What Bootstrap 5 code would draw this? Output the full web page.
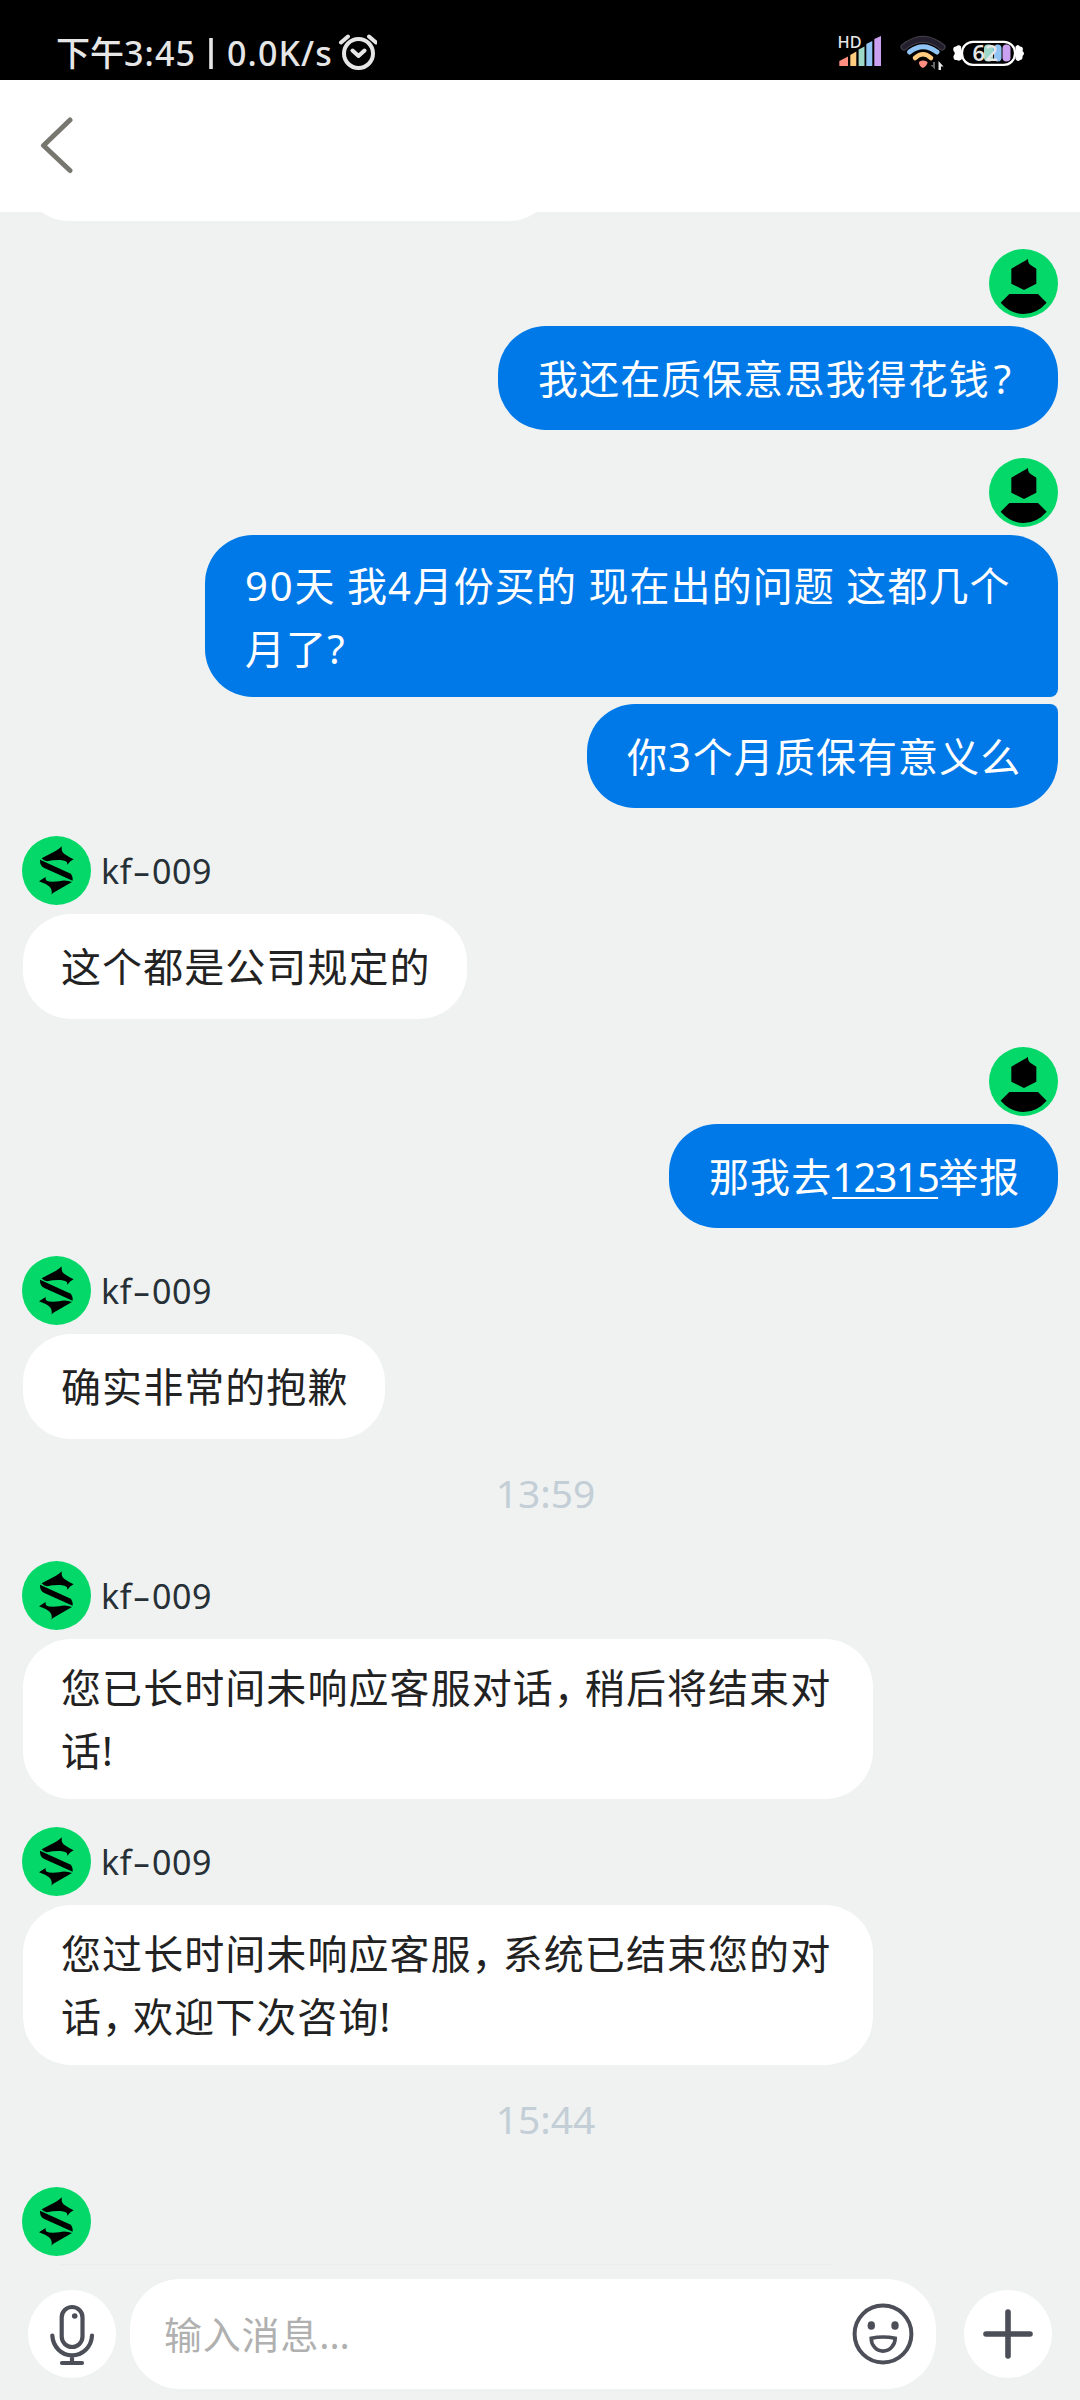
<!DOCTYPE html>
<html lang="zh-CN">
<head>
<meta charset="utf-8">
<meta name="viewport" content="width=device-width, initial-scale=1">
<title>客服对话</title>
<link rel="stylesheet" href="https://cdn.jsdelivr.net/npm/bootstrap@5.3.0/dist/css/bootstrap.min.css">
<style>
body{width:1080px;height:2400px;overflow:hidden;background:#eff2f1;font-family:"Noto Sans","Noto Sans CJK SC",sans-serif;color:#222}
svg{display:block;flex:none}
.statusbar{height:80px;padding:0 56px 0 56px;background:#000;color:#e6e6e6;font-size:34px;font-weight:500;line-height:48px}
.clock{padding-top:29px;white-space:pre}
.topbar{height:132px;padding-left:40px;background:#fff}
.chat{padding:0 22px}
.rest{width:532px;height:9px;margin-left:1px;overflow:hidden}
.rest div{width:532px;height:104px;margin-top:-95px;background:#fff;border-radius:46px}
.grp{margin-top:28px}
.ava{width:69px;height:69px}
.who{font-size:34px;line-height:48px;margin-left:10px;color:#263036;letter-spacing:.6px}
.dash{display:inline-block;transform:scaleX(1.65);margin:0 5px 0 4px;letter-spacing:0}
.bub{font-size:40px;line-height:63px;letter-spacing:1.07px;white-space:nowrap;border-radius:48px;padding:21px 0 20px 40px}
.me{background:#0079e8;color:#fff;margin-top:8px}
.me.two{padding:19px 0 17px 40px}
.kf{background:#fff;margin:9px 0 0 1px;padding:21px 0 21px 38px}
.kf.two{padding:17px 0;padding-left:38px;width:850px}
.tail-b{border-bottom-right-radius:8px}
.tail-t{border-top-right-radius:8px;margin-top:7px}
.w560{width:560px}.w853{width:853px}.w471{width:471px}.w444{width:444px}.w389{width:389px}.w362{width:362px}
.dg{letter-spacing:1.8px}
.tel{color:#fff;letter-spacing:-1.7px;text-decoration:underline;text-decoration-thickness:2px;text-underline-offset:5px}
.cm{letter-spacing:-9px}
.stamp{height:122px;padding-left:11px;padding-bottom:13px;font-size:39px;color:#c3ced6;margin-bottom:-28px}
.edge{width:772px;height:1px;margin:8px 0 0 38px;background:#e9eded}
.composer{height:110px;margin-top:14px;padding:0 28px}
.rnd{width:88px;height:88px;background:#fff}
.field{width:806px;height:110px;border-radius:50px;background:#fff;margin-left:14px;margin-right:28px;padding:0 22px 0 34px;font-size:38px;letter-spacing:.8px;color:#b0b0b0}
.dots{letter-spacing:0}
.spaced{letter-spacing:1.1px}
</style>
<script src="https://cdn.jsdelivr.net/npm/bootstrap@5.3.0/dist/js/bootstrap.bundle.min.js"></script>
</head>
<body>
<svg width="0" height="0" class="position-absolute">
<symbol id="s-logo" viewBox="66 48 207 207">
<circle cx="169.500" cy="151.500" r="103.500" fill="#04d868"/>
<path d="M125 115 168 92Q181 85 185 79Q184 92 188 97Q194 105 221 118Q211 122 202 134L201 126Q195 121 182 120Q160 119 141 124Q131 122 125 115Z"/>
<path d="M120 119 209 160Q219 165 218 182L133 144Q119 137 120 119Z"/>
<path d="M117 184 137 171Q135 178 140 182Q150 187 178 184Q195 178 216 186L160 218Q157 220 155 224Q157 206 147 199Q137 191 117 184Z"/>
</symbol>
<symbol id="p-user" viewBox="1047 51 207 207">
<circle cx="1150.500" cy="154.500" r="103.500" fill="#04d868"/>
<path d="M1114 110 1150 89Q1160 84 1164 80Q1163 94 1173 100L1189 110V155L1152 174 1114 155Z"/>
<path d="M1108 186H1194L1220 212Q1190 246 1151 246Q1112 246 1082 212Z"/>
</symbol>
</svg>

<header>
<div class="statusbar d-flex justify-content-between">
 <div class="d-flex">
  <div class="clock">下午<span class="spaced">3:45</span></div>
  <svg width="31" height="80" viewBox="0 0 31 80"><path d="M15 38V69" stroke="#e6e6e6" stroke-width="3.600"/></svg>
  <div class="clock spaced">0.0K/s</div>
  <svg width="44" height="80" viewBox="332 0 44 80" fill="none" stroke="#e6e6e6" stroke-width="4" stroke-linecap="round" stroke-linejoin="round"><circle cx="357.500" cy="53.500" r="14.500"/><path d="M351.500 50.500 357.500 56 363.500 50.500M340 42.500 347 36.500M368 36.500 375 42.500"/></svg>
 </div>
 <svg width="188" height="80" viewBox="836 0 188 80">
  <text x="837.500" y="48" font-size="16.500" font-weight="500" fill="#e6e6e6" textLength="24" lengthAdjust="spacingAndGlyphs">HD</text>
  <path d="M839.300 66V61L848 56.500V66Z" fill="#ff8c80"/><path d="M850.300 66V55L856.300 51.500V66Z" fill="#ffcc80"/><path d="M858.600 66V49.500L864.500 46.500V66Z" fill="#9ed8c8"/><path d="M866.300 66V44L872.300 41V66Z" fill="#90c4f4"/><path d="M874.300 66V39L881 36V66Z" fill="#cba0f0"/>
  <g fill="none" stroke-linecap="round"><path d="M904 47Q923 31.500 942 47" stroke="#45404c" stroke-width="7"/><path d="M904 47Q923 31.500 942 47" stroke="#241f2c" stroke-width="5"/><path d="M909.500 52Q923 41.500 937 52" stroke="#90c4f4" stroke-width="5"/><path d="M915 58Q923 50.500 931 58" stroke="#ffcc80" stroke-width="4.500"/></g>
  <path d="M919 63Q918.500 61 923 60.500Q928 61 927.500 63Q926.500 66.500 923 68Q919.500 66.500 919 63Z" fill="#ff8c80"/>
  <path d="M935 62V69.500L930.500 65H933V62Z" fill="#666"/><path d="M938.500 70V61L943.500 66.500H941V70Z" fill="#e6e6e6"/>
  <path d="M961 46.500Q959 44 956 46.500Q952.500 46.500 953.500 51Q956 53 953.500 56Q953 60.500 957 60Q959 62 962 59ZM1015.500 46.500Q1018 43.500 1020 46.500Q1024 47 1022.500 51Q1025.500 53.500 1022.500 56Q1023 60 1020 60Q1018 62.500 1015.500 59Z" fill="#fff"/>
  <rect x="962" y="41.800" width="53" height="23" rx="11" fill="#000" stroke="#fff" stroke-width="2.300"/>
  <rect x="984" y="44.500" width="9" height="17" rx="4" fill="#9ed8c8"/><rect x="994" y="44.500" width="7.500" height="17" rx="3.700" fill="#90c4f4"/><rect x="1002.500" y="44.500" width="8" height="17" rx="4" fill="#cba0f0"/>
  <text x="972.500" y="60.500" font-size="22" font-weight="600" fill="#e6e6e6">62</text>
 </svg>
</div>
<div class="topbar"><svg width="34" height="132" viewBox="40 0 34 132"><path d="M70 40 43.500 65.500 70 90.500" fill="none" stroke="#77776f" stroke-width="5" stroke-linecap="round" stroke-linejoin="round"/></svg></div>
</header>

<main class="chat d-flex flex-column">
 <div class="rest"><div></div></div>

 <section class="grp d-flex flex-column align-items-end"><svg class="ava"><use href="#p-user"/></svg>
  <div class="bub me w560">我还在质保意思我得花钱<span class="ps-1">?</span></div></section>

 <section class="grp d-flex flex-column align-items-end"><svg class="ava"><use href="#p-user"/></svg>
  <div class="bub me two w853 tail-b"><span class="dg">90</span>天 我<span class="dg">4</span>月份买的 现在出的问题 这都几个<br>月了?</div>
  <div class="bub me w471 tail-t">你<span class="dg">3</span>个月质保有意义么</div></section>

 <section class="grp"><div class="d-flex align-items-center"><svg class="ava"><use href="#s-logo"/></svg><span class="who">kf<span class="dash">-</span>009</span></div>
  <div class="bub kf w444">这个都是公司规定的</div></section>

 <section class="grp d-flex flex-column align-items-end"><svg class="ava"><use href="#p-user"/></svg>
  <div class="bub me w389">那我去<a href="#" class="tel">12315</a>举报</div></section>

 <section class="grp"><div class="d-flex align-items-center"><svg class="ava"><use href="#s-logo"/></svg><span class="who">kf<span class="dash">-</span>009</span></div>
  <div class="bub kf w362">确实非常的抱歉</div></section>

 <div class="stamp d-flex align-items-center justify-content-center">13:59</div>

 <section class="grp"><div class="d-flex align-items-center"><svg class="ava"><use href="#s-logo"/></svg><span class="who">kf<span class="dash">-</span>009</span></div>
  <div class="bub kf two">您已长时间未响应客服对话<span class="cm">，</span>稍后将结束对<br>话!</div></section>

 <section class="grp"><div class="d-flex align-items-center"><svg class="ava"><use href="#s-logo"/></svg><span class="who">kf<span class="dash">-</span>009</span></div>
  <div class="bub kf two">您过长时间未响应客服<span class="cm">，</span>系统已结束您的对<br>话<span class="cm">，</span>欢迎下次咨询!</div></section>

 <div class="stamp d-flex align-items-center justify-content-center">15:44</div>

 <section class="grp"><svg class="ava"><use href="#s-logo"/></svg><div class="edge"></div></section>
</main>

<footer class="composer d-flex align-items-center">
 <div class="rnd rounded-circle"><svg width="88" height="88" viewBox="28 2290 88 88" fill="none" stroke="#4c4e58" stroke-width="4.200" stroke-linecap="round"><rect x="61.700" y="2307" width="20.800" height="40" rx="10.400"/><path d="M52.300 2335.500C53 2347 61.500 2355.300 72 2355.300S91.500 2347 92 2335.500M72 2355.500V2363M62 2363H82"/><circle cx="74.700" cy="2316" r="2.800" fill="#4c4e58" stroke="none"/></svg></div>
 <div class="field d-flex align-items-center justify-content-between"><span>输入消息<span class="dots">...</span></span>
  <svg width="62" height="62" viewBox="852.300 2302.700 62 62" fill="none" stroke="#4c4e58" stroke-width="4"><circle cx="883.300" cy="2333.700" r="28.400"/><path d="M871.500 2338Q883.300 2335.500 895.500 2338C895.500 2345 890 2350.800 883.300 2350.800S871.500 2345 871.500 2338Z" stroke-width="3.600"/><ellipse cx="871.600" cy="2325.200" rx="3.700" ry="4.300" fill="#4c4e58" stroke="none"/><ellipse cx="895.300" cy="2325.200" rx="3.700" ry="4.300" fill="#4c4e58" stroke="none"/></svg></div>
 <div class="rnd rounded-circle"><svg width="88" height="88" viewBox="0 0 88 88"><path d="M22 44H66M44 22V66" stroke="#4c4e58" stroke-width="5.600" stroke-linecap="round"/></svg></div>
</footer>
</body>
</html>
